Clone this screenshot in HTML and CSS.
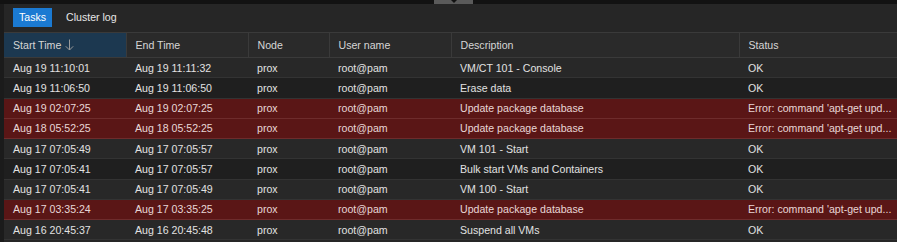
FILE: index.html
```html
<!DOCTYPE html>
<html lang="en">
<head>
  <meta charset="UTF-8" />
  <title>Tasks</title>
  <link rel="stylesheet" href="styles.css">
</head>
<body>

<div class="topbar">
  <div class="handle">
    <svg width="8" height="4" viewBox="0 0 8 4"><path d="M1 0 L7 0 L4 3 Z" fill="#111"/></svg>
  </div>
</div>

<div class="panel">
  <div class="tabs">
    <span class="tab active">Tasks</span>
    <span class="tab">Cluster log</span>
  </div>

  <table class="grid">
    <colgroup>
      <col style="width:122px"><col style="width:122px"><col style="width:81px">
      <col style="width:122px"><col style="width:288px"><col>
    </colgroup>
    <thead>
      <tr>
        <th class="sorted">Start Time <svg class="arrow" width="9" height="12" viewBox="0 0 9 12"><path d="M4.5 0.5 V11 M0.8 7.3 L4.5 11 L8.2 7.3" fill="none" stroke="#9a9a9a" stroke-width="1"/></svg></th>
        <th>End Time</th>
        <th>Node</th>
        <th>User name</th>
        <th>Description</th>
        <th>Status</th>
      </tr>
    </thead>
    <tbody>
      <tr><td>Aug 19 11:10:01</td><td>Aug 19 11:11:32</td><td>prox</td><td>root@pam</td><td>VM/CT 101 - Console</td><td>OK</td></tr>
      <tr><td>Aug 19 11:06:50</td><td>Aug 19 11:06:50</td><td>prox</td><td>root@pam</td><td>Erase data</td><td>OK</td></tr>
      <tr class="err"><td>Aug 19 02:07:25</td><td>Aug 19 02:07:25</td><td>prox</td><td>root@pam</td><td>Update package database</td><td>Error: command 'apt-get upd...</td></tr>
      <tr class="err"><td>Aug 18 05:52:25</td><td>Aug 18 05:52:25</td><td>prox</td><td>root@pam</td><td>Update package database</td><td>Error: command 'apt-get upd...</td></tr>
      <tr><td>Aug 17 07:05:49</td><td>Aug 17 07:05:57</td><td>prox</td><td>root@pam</td><td>VM 101 - Start</td><td>OK</td></tr>
      <tr><td>Aug 17 07:05:41</td><td>Aug 17 07:05:57</td><td>prox</td><td>root@pam</td><td>Bulk start VMs and Containers</td><td>OK</td></tr>
      <tr><td>Aug 17 07:05:41</td><td>Aug 17 07:05:49</td><td>prox</td><td>root@pam</td><td>VM 100 - Start</td><td>OK</td></tr>
      <tr class="err"><td>Aug 17 03:35:24</td><td>Aug 17 03:35:25</td><td>prox</td><td>root@pam</td><td>Update package database</td><td>Error: command 'apt-get upd...</td></tr>
      <tr><td>Aug 16 20:45:37</td><td>Aug 16 20:45:48</td><td>prox</td><td>root@pam</td><td>Suspend all VMs</td><td>OK</td></tr>
    </tbody>
  </table>
</div>

</body>
</html>
```

FILE: styles.css
```css
* {
  margin: 0; padding: 0; box-sizing: border-box;
  font-family: 'Liberation Sans', Arial, sans-serif;
}

body {
  background: #1b1b1b;
  color: #e2e2e2;
  width: 897px;
  height: 242px;
  overflow: hidden;
}

.topbar {
  height: 4px;
  background: #121212;
  padding-left: 434px;
}

.handle {
  width: 39px;
  height: 4px;
  background: #5a5a5a;
  display: flex;
  justify-content: center;
}

.handle svg { display: block; }

.panel {
  margin-left: 4px;
  background: #262626;
  height: 238px;
}

.tabs {
  height: 28px;
  display: flex;
  align-items: flex-start;
  gap: 1px;
  padding: 4px 0 0 9px;
}

.tab {
  font-size: 10.6px;
  height: 19px;
  line-height: 19px;
  padding: 0 13px 0 13px;
  color: #e6e6e6;
}

.tab.active {
  background: #1b7ad2;
  color: #fff;
  padding: 0 5px 0 5px;
  width: 39px;
  text-align: center;
}

.grid {
  width: 893px;
  border-collapse: collapse;
  table-layout: fixed;
  font-size: 10.6px;
}

.grid th {
  height: 25px;
  background: #2a2a2a;
  border-top: 1px solid #3a3a3a;
  border-bottom: 1px solid #3a3a3a;
  border-right: 1px solid #3a3a3a;
  text-align: left;
  font-weight: normal;
  color: #d6d6d6;
  padding-left: 9px;
  white-space: nowrap;
}

.grid th:last-child { border-right: none; }

.grid th.sorted { background: #1c3850; }

.arrow {
  vertical-align: -2px;
  margin-left: 1px;
}

.grid td {
  height: 20.25px;
  padding: 0 0 0 9px;
  border-bottom: 1px solid #333;
  white-space: nowrap;
  overflow: hidden;
}

.grid tbody tr:nth-child(odd) { background: #282828; }
.grid tbody tr:nth-child(even) { background: #1f1f1f; }

.grid tbody tr.err {
  background: #5a1616;
  color: #e8d6d6;
}

.grid tbody tr.err td { border-bottom-color: #6e2c2c; }
```
